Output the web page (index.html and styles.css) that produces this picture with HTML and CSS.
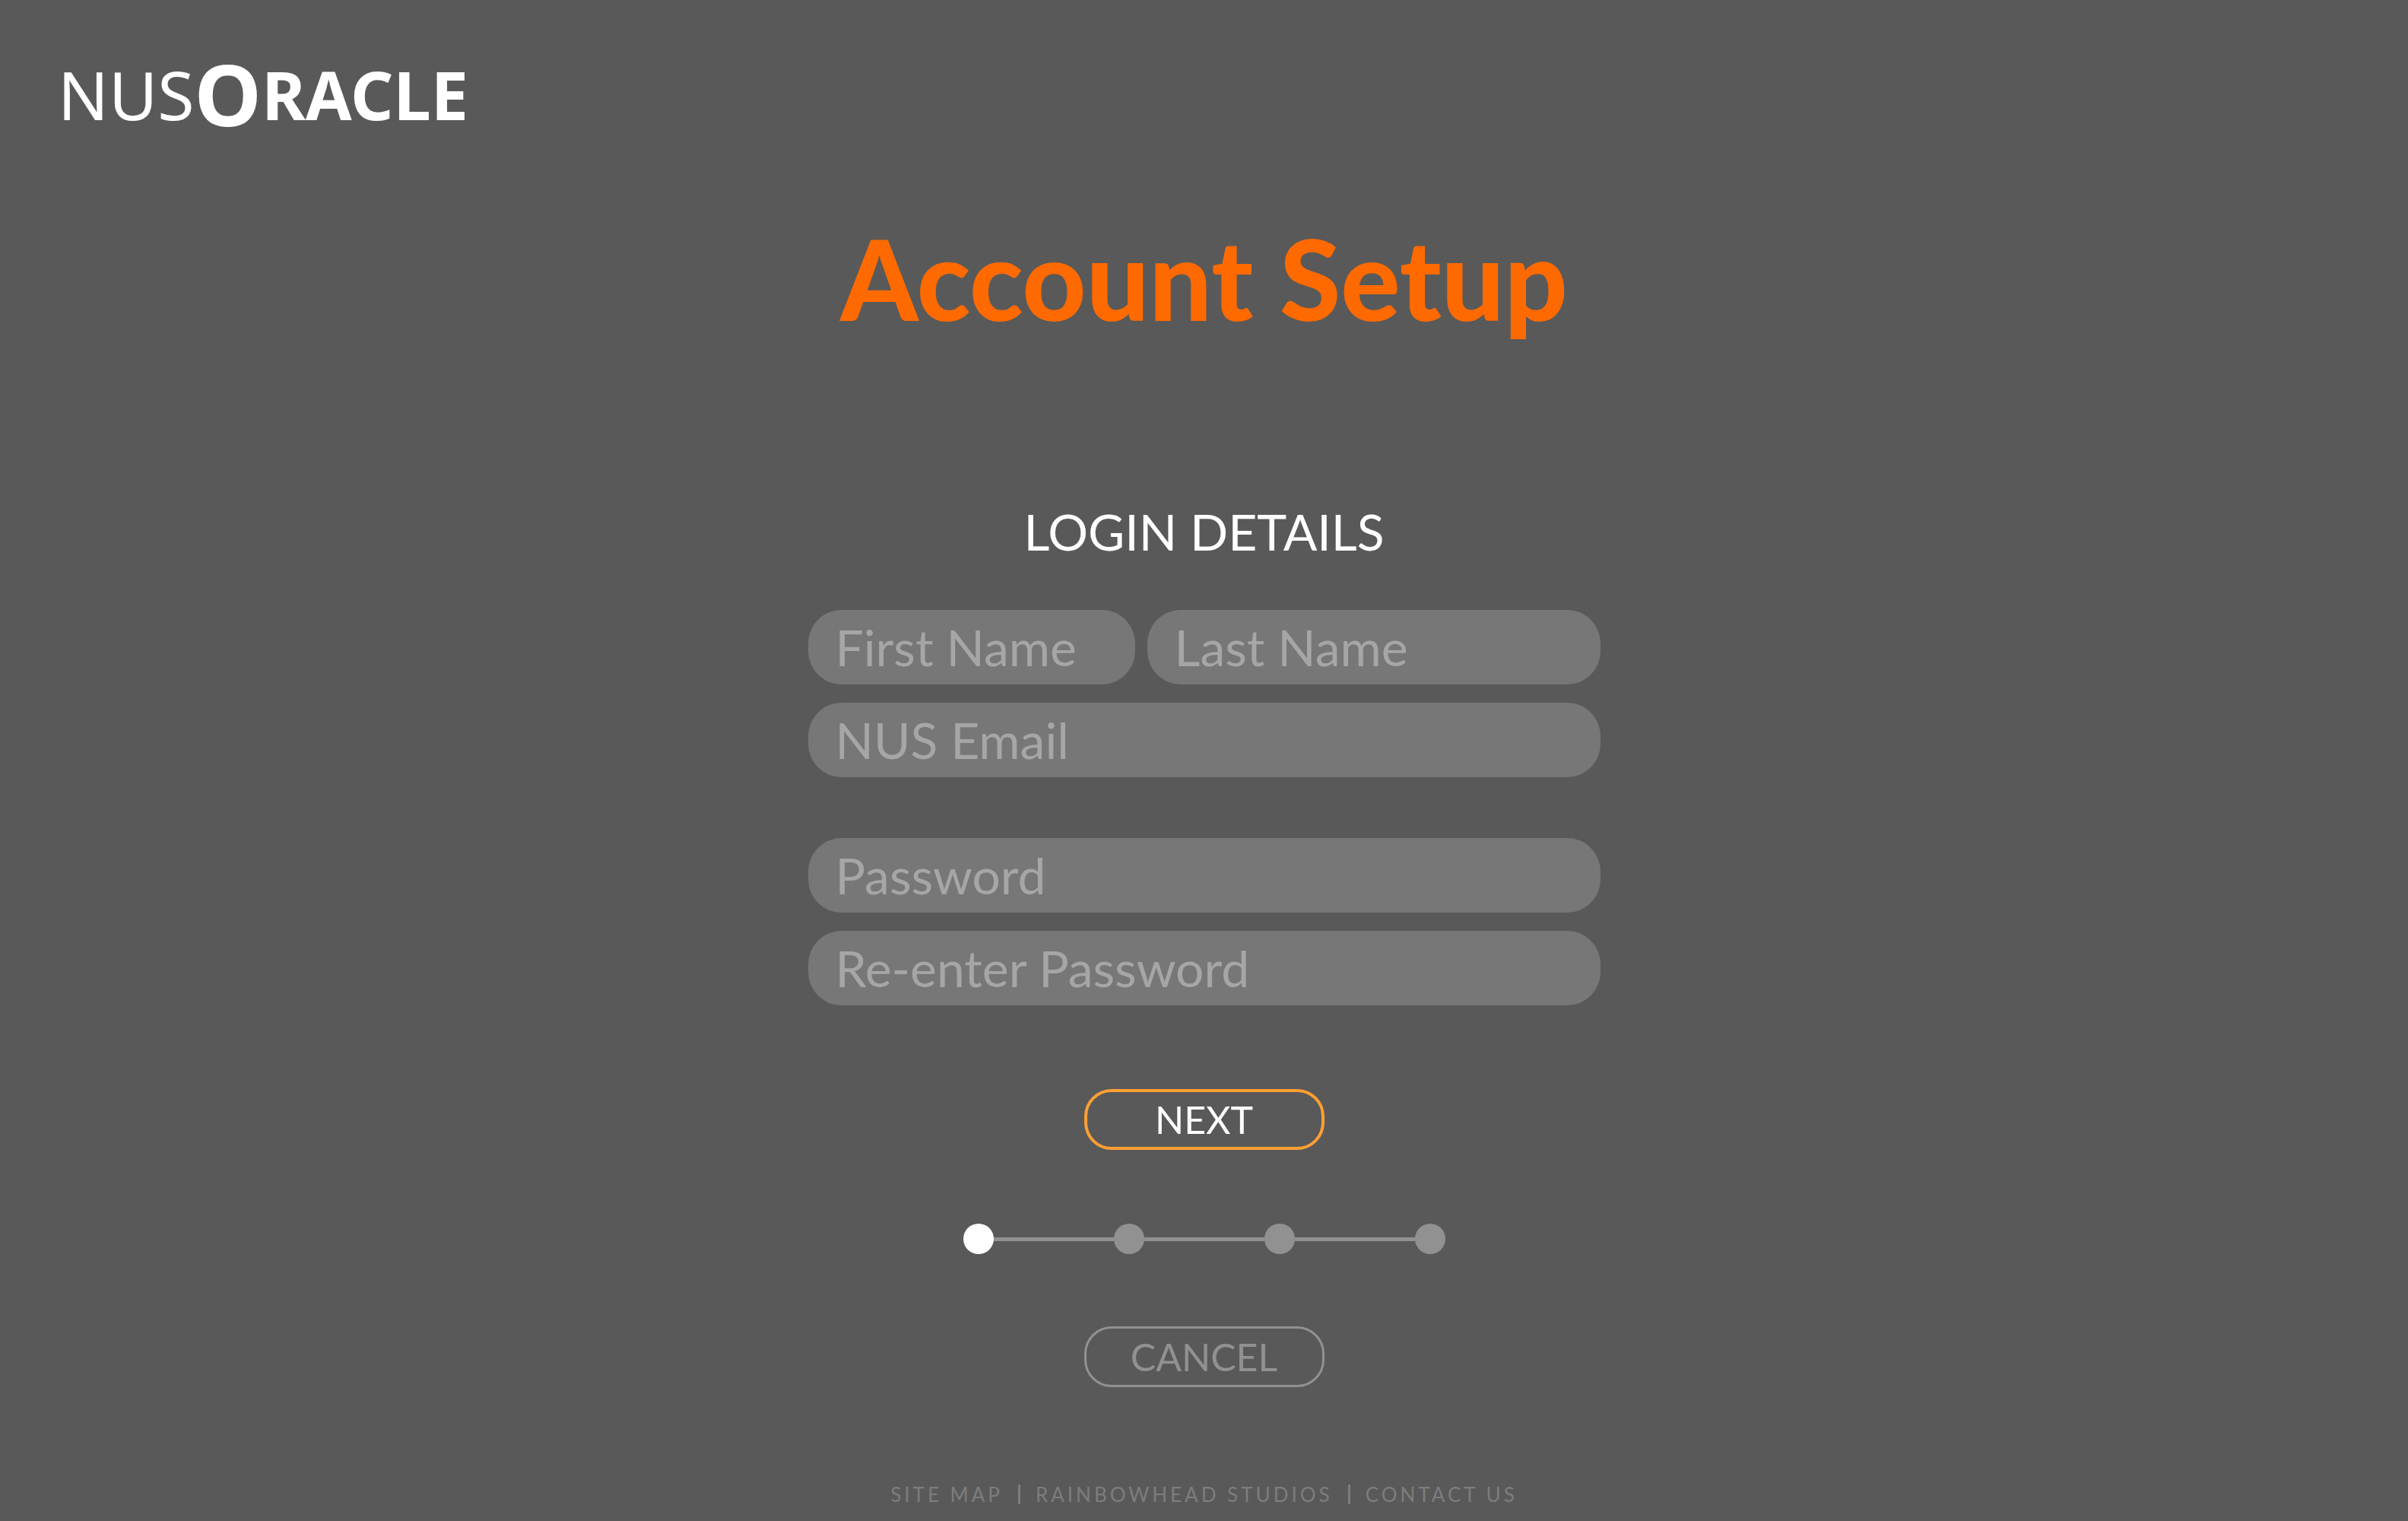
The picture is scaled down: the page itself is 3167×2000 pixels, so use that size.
FILE: index.html
```html
<!DOCTYPE html>
<html lang="en">
<head>
<meta charset="utf-8">
<meta name="viewport" content="width=device-width, initial-scale=1">
<title>Account Setup – NUSOracle</title>
<link rel="stylesheet" href="styles.css">
</head>
<body>
<header class="site-header">
  <a class="logo" href="#">NUS<b><span class="logo-o">O</span>RACLE</b></a>
</header>
<main class="setup">
  <h1 class="title">Account Setup</h1>
  <form class="form">
    <h2 class="subtitle">LOGIN DETAILS</h2>
    <div class="fields">
      <div class="name-row">
        <input class="field" type="text" placeholder="First Name" aria-label="First Name">
        <input class="field" type="text" placeholder="Last Name" aria-label="Last Name">
      </div>
      <input class="field" type="email" placeholder="NUS Email" aria-label="NUS Email">
    </div>
    <div class="fields passwords">
      <input class="field" type="password" placeholder="Password" aria-label="Password">
      <input class="field" type="password" placeholder="Re-enter Password" aria-label="Re-enter Password">
    </div>
    <button class="button next" type="submit">NEXT</button>
    <ol class="steps" aria-label="Step 1 of 4">
      <li class="step current" aria-current="step"></li>
      <li class="step"></li>
      <li class="step"></li>
      <li class="step"></li>
    </ol>
    <button class="button cancel" type="button">CANCEL</button>
  </form>
</main>
<footer class="site-footer">
  <a href="#">SITE MAP</a><span class="divider"></span><a href="#">RAINBOWHEAD STUDIOS</a><span class="divider"></span><a href="#">CONTACT US</a>
</footer>
</body>
</html>
```
FILE: styles.css
```css
* {
  box-sizing: border-box;
}

body {
  margin: 0;
  min-height: 100vh;
  display: flex;
  flex-direction: column;
  background: #595959;
  color: #fff;
  font-family: Lato, "Open Sans", sans-serif;
}

a {
  color: inherit;
  text-decoration: none;
}

.site-header {
  padding: 60px 76px 0;
}

.logo {
  display: block;
  font-family: "Noto Sans", "Open Sans", sans-serif;
  font-size: 88px;
  line-height: 128px;
}

.logo-o {
  font-size: 112px;
  line-height: 1;
  vertical-align: -8px;
}

.setup {
  display: flex;
  flex-direction: column;
  align-items: center;
}

.title {
  margin: 94px 0 0;
  color: #ff6a00;
  font-size: 146px;
  font-weight: 900;
  line-height: 168px;
}

.form {
  width: 1042px;
  max-width: 100%;
  display: flex;
  flex-direction: column;
  align-items: center;
}

.subtitle {
  margin: 206px 0 60px;
  font-size: 66px;
  font-weight: 400;
  line-height: 86px;
}

.fields {
  width: 100%;
  display: flex;
  flex-direction: column;
  gap: 24px;
}

.passwords {
  margin-top: 80px;
}

.name-row {
  display: grid;
  grid-template-columns: 430fr 596fr;
  gap: 16px;
}

.field {
  width: 100%;
  min-width: 0;
  height: 98px;
  padding: 0 36px;
  border: 0;
  border-radius: 44px;
  background: #777;
  color: #fff;
  font: 400 66px/98px Lato, "Open Sans", sans-serif;
}

.field::placeholder {
  color: #a6a6a6;
  opacity: 1;
}

.button {
  width: 316px;
  height: 80px;
  padding: 0;
  border-radius: 36px;
  background: transparent;
  font: 400 50px/64px Lato, "Open Sans", sans-serif;
}

.next {
  margin-top: 110px;
  border: 4px solid #ff9f33;
  color: #fff;
}

.cancel {
  border: 3px solid #919191;
  color: #919191;
}

.steps {
  display: flex;
  margin: 97px 0 95px;
  padding: 0;
  gap: 158px;
  list-style: none;
}

.step {
  position: relative;
  width: 40px;
  height: 40px;
  border-radius: 50%;
  background: #919191;
}

.step + .step::before {
  content: "";
  position: absolute;
  top: 18px;
  right: 100%;
  width: 158px;
  height: 5px;
  background: #919191;
}

.current {
  background: #fff;
}

.site-footer {
  display: flex;
  justify-content: center;
  align-items: center;
  gap: 20px;
  margin-top: auto;
  padding-bottom: 18px;
  color: #7d7d7d;
  font-size: 26px;
  line-height: 34px;
  letter-spacing: 4px;
}

.divider {
  width: 3px;
  height: 26px;
  background: #7d7d7d;
}
```
